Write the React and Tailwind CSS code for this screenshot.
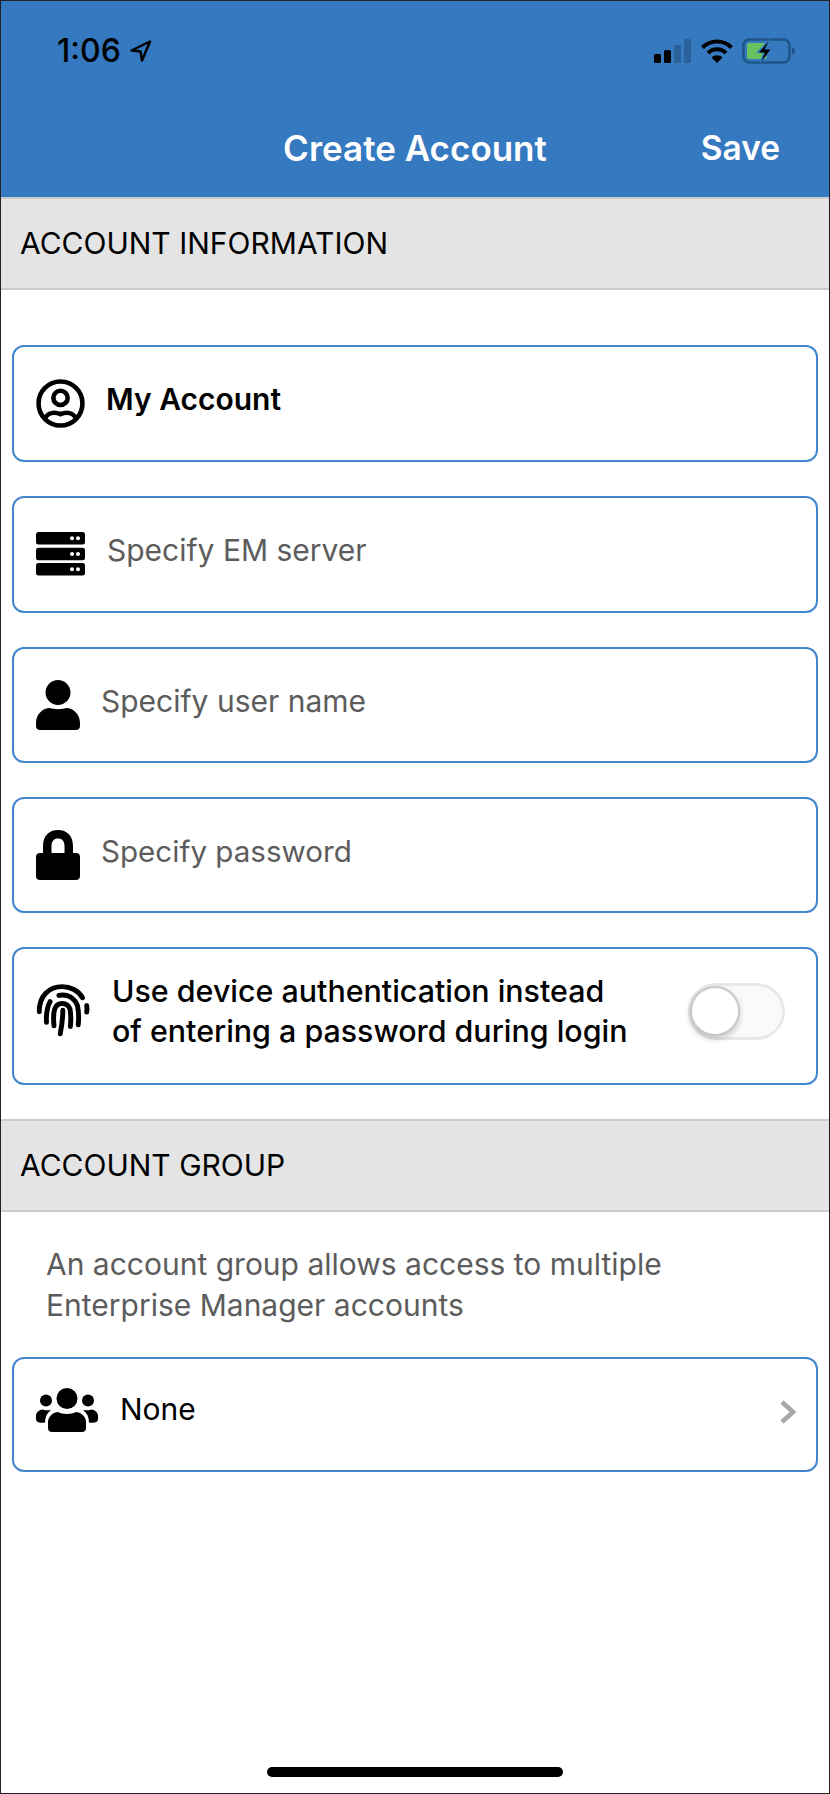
const font = "font-['Inter',sans-serif]";

const SectionHeader = ({ title, height }) => (
  <div className={`${height} flex items-center pl-[19px] bg-[#e4e4e4] border-y-2 border-[#cbcbcb] text-[30px] text-black`}>
    {title}
  </div>
);

const Card = ({ icon, height = "h-[117px]", className = "", children }) => (
  <div className={`${height} mx-[11px] flex items-center pl-[22px] rounded-xl border-2 border-[#4287cd] bg-white ${className}`}>
    {icon}
    {children}
  </div>
);

const AccountIcon = () => (
  <svg width="49" height="49" viewBox="0 0 48 48" fill="none" stroke="black" strokeWidth="4.500">
    <circle cx="24" cy="24" r="21.500" />
    <circle cx="24" cy="18.500" r="7" />
    <path d="M8.500 38.500C12 33 18 32 24 34.500C30 32 36 33 39.500 38.500" />
  </svg>
);

const ServerIcon = () => (
  <svg className="-mt-[2px]" width="49" height="44" viewBox="0 0 49 44" fill="black">
    <rect x="0" y="0" width="49" height="12.500" rx="2.500" />
    <rect x="0" y="15.700" width="49" height="12.500" rx="2.500" />
    <rect x="0" y="31" width="49" height="12.500" rx="2.500" />
    <g fill="white">
      <circle cx="36" cy="6.200" r="2" /><circle cx="42" cy="6.200" r="2" />
      <circle cx="36" cy="22" r="2" /><circle cx="42" cy="22" r="2" />
      <circle cx="36" cy="37.200" r="2" /><circle cx="42" cy="37.200" r="2" />
    </g>
  </svg>
);

const UserIcon = () => (
  <svg width="44" height="50" viewBox="0 0 44 50" fill="black">
    <circle cx="22" cy="12.500" r="12.500" />
    <path d="M0 46V43C0 34 7 28 14 28C17 29.500 27 29.500 30 28C37 28 44 34 44 43V46C44 48.500 42.500 50 40 50H4C1.500 50 0 48.500 0 46Z" />
  </svg>
);

const LockIcon = () => (
  <svg width="44" height="50" viewBox="0 0 44 50" fill="black">
    <path fillRule="evenodd" d="M7 23V16C7 6 13 0 22 0C31 0 37 6 37 16V23H40C42.500 23 44 24.500 44 27V46C44 48.500 42.500 50 40 50H4C1.500 50 0 48.500 0 46V27C0 24.500 1.500 23 4 23ZM15.500 23H28.500V16C28.500 11 26 8.500 22 8.500C18 8.500 15.500 11 15.500 16Z" />
  </svg>
);

const FingerprintIcon = () => (
  <svg className="-mt-[12px]" width="54" height="54" viewBox="45 95 165 165" fill="none" stroke="black" strokeWidth="15" strokeLinecap="round">
    <path d="M55 183C54 135 85 106 125 106C150 106 175 118 187 140" />
    <path d="M200 164C201 170 201 178 200 184" />
    <path d="M77 215C76 195 78 170 88 152" />
    <path d="M115 133C140 127 163 140 172 165C176 185 176 205 174 223" />
    <path d="M100 226C98 205 97 190 102 175C110 152 140 152 149 175C152 195 152 210 150 228" />
    <path d="M119 250C124 225 127 200 127 178" />
  </svg>
);

const GroupIcon = () => (
  <svg className="-mt-[10px]" width="62" height="44" viewBox="0 0 62 44" fill="black">
    <circle cx="31" cy="10.500" r="10.500" />
    <circle cx="10" cy="12.500" r="6" />
    <circle cx="52" cy="12.500" r="6" />
    <path d="M12 40V34C12 28 18 24 22 24C26 26.500 36 26.500 40 24C44 24 50 28 50 34V40C50 42.500 48.500 44 46 44H16C13.500 44 12 42.500 12 40Z" />
    <path d="M0 31V28C0 24.500 3 21.500 7 21.500C9 22.500 12 22.500 15 22C11 25 9 29 9 34.500C5 35 0 35 0 31Z" />
    <path d="M62 31V28C62 24.500 59 21.500 55 21.500C53 22.500 50 22.500 47 22C51 25 53 29 53 34.500C57 35 62 35 62 31Z" />
  </svg>
);

const StatusIcons = () => (
  <div className="flex items-center">
    <svg width="37" height="24" viewBox="0 0 37 24">
      <rect x="0" y="15" width="7" height="9" rx="1.500" fill="black" />
      <rect x="10" y="11" width="7" height="13" rx="1.500" fill="black" />
      <rect x="20" y="6" width="7" height="18" rx="1.500" fill="#2a6199" />
      <rect x="30" y="0" width="7" height="24" rx="1.500" fill="#2a6199" />
    </svg>
    <svg className="ml-[10px]" width="32" height="24" viewBox="0 0 32 24" fill="none" stroke="black" strokeWidth="4">
      <path d="M1.500 8.500C9.500 0.500 22.500 0.500 30.500 8.500" />
      <path d="M7 14C12 9 20 9 25 14" />
      <path d="M16 24L10.500 18.500C13.500 15.500 18.500 15.500 21.500 18.500Z" fill="black" stroke="none" />
    </svg>
    <svg className="ml-[9px]" width="54" height="26" viewBox="0 0 54 26">
      <rect x="1.500" y="1.500" width="46" height="23" rx="6" fill="none" stroke="#1f5488" strokeWidth="2.500" />
      <rect x="5" y="5" width="20" height="16" rx="2" fill="#69c060" />
      <path d="M28 0L14 15H21L17 26L32 10H25Z" fill="#3579c1" />
      <path d="M27 3L17 14.500H23L19.500 23.500L28.500 11.500H22.500Z" fill="black" />
      <path d="M50 9.500C52 10 53 11.500 53 13C53 14.500 52 16 50 16.500Z" fill="#1f5488" />
    </svg>
  </div>
);

const App = () => {
  return (
    <div className={`${font} w-[830px] h-[1794px] flex flex-col border border-[#222] bg-white overflow-hidden`}>
      <div className="h-[196px] shrink-0 bg-[#3579c1] flex flex-col">
        <div className="flex items-center justify-between pt-[35px] pl-[56px] pr-[33px] h-[65px]">
          <div className="flex items-center">
            <span className="text-[32px] leading-none font-medium text-black">1:06</span>
            <svg className="ml-[9px]" width="22" height="22" viewBox="0 0 22 22" fill="none" stroke="black" strokeWidth="2.500" strokeLinejoin="round">
              <path d="M1.500 10.500L20 1.500L12 20.500L10.500 11.500Z" />
            </svg>
          </div>
          <StatusIcons />
        </div>
        <div className="grid grid-cols-[1fr_auto_1fr] items-center mt-[60px] text-white font-semibold">
          <div />
          <div className="text-[35px] leading-[44px]">Create Account</div>
          <div className="text-[33.500px] leading-[44px] text-right pr-[49px]">Save</div>
        </div>
      </div>

      <SectionHeader title="ACCOUNT INFORMATION" height="h-[93px]" />

      <div className="flex flex-col gap-[34px] mt-[55px]">
        <Card icon={<AccountIcon />}>
          <span className="ml-[21px] -mt-[8px] text-[30px] font-semibold text-black">My Account</span>
        </Card>
        <Card icon={<ServerIcon />}>
          <span className="ml-[22px] -mt-[8px] text-[30px] text-[#5c5c5c]">Specify EM server</span>
        </Card>
        <Card icon={<UserIcon />} height="h-[116px]">
          <span className="ml-[21px] -mt-[8px] text-[30px] text-[#5c5c5c]">Specify user name</span>
        </Card>
        <Card icon={<LockIcon />} height="h-[116px]">
          <span className="ml-[21px] -mt-[8px] text-[29.600px] text-[#5c5c5c]">Specify password</span>
        </Card>
        <Card icon={<FingerprintIcon />} height="h-[138px]" className="relative">
          <div className="ml-[22px] -mt-[11px] text-[30.400px] leading-[40px] font-medium text-black">
            <div>Use device authentication instead</div>
            <div>of entering a password during login</div>
          </div>
          <div className="ml-auto mr-[31px] -mt-[9px] relative w-[97px] h-[57px] rounded-full border-[3px] border-[#e9e9e9] bg-[#fafafa]">
            <div className="absolute -left-[1px] top-[0px] w-[50px] h-[50px] rounded-full bg-white border-2 border-[#c8c8c8] shadow-[0_3px_6px_rgba(0,0,0,0.2)]" />
          </div>
        </Card>
      </div>

      <div className="mt-[34px]">
        <SectionHeader title="ACCOUNT GROUP" height="h-[93px]" />
      </div>

      <div className="pl-[45px] pt-[32px] text-[30px] leading-[41px] text-[#5c5c5c]">
        <div>An account group allows access to multiple</div>
        <div>Enterprise Manager accounts</div>
      </div>

      <div className="mt-[31px]">
        <Card icon={<GroupIcon />} height="h-[115px]">
          <span className="ml-[22px] -mt-[10px] text-[30px] text-black">None</span>
          <svg className="ml-auto mr-[19px] -mt-[5px]" width="18" height="26" viewBox="0 0 18 26" fill="none" stroke="#a8a8a8" strokeWidth="4.500">
            <path d="M3 3L14 13L3 23" />
          </svg>
        </Card>
      </div>

      <div className="mt-auto mb-[16px] mx-auto w-[296px] h-[10px] rounded-full bg-black" />
    </div>
  );
};

export default App;
